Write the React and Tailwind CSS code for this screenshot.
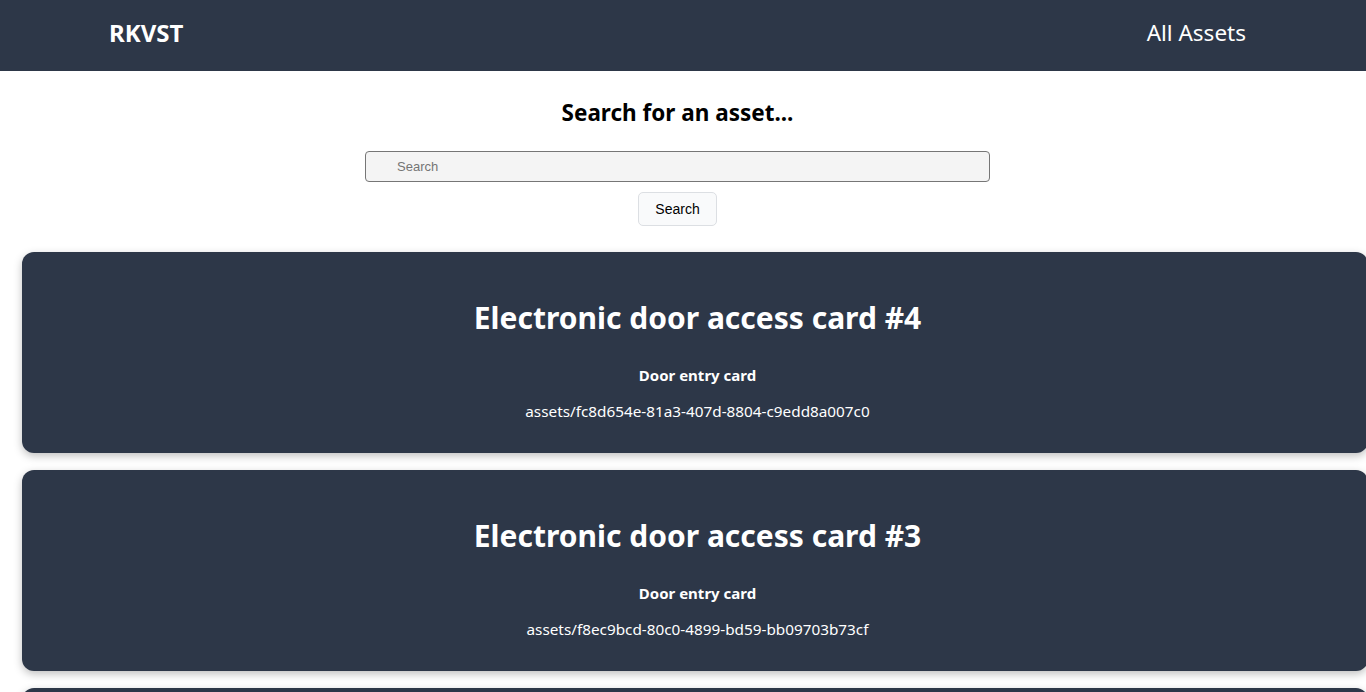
const assets = [
    {
        name: "Electronic door access card #4",
        type: "Door entry card",
        id: "assets/fc8d654e-81a3-407d-8804-c9edd8a007c0",
    },
    {
        name: "Electronic door access card #3",
        type: "Door entry card",
        id: "assets/f8ec9bcd-80c0-4899-bd59-bb09703b73cf",
    },
    {
        name: "Electronic door access card #2",
        type: "Door entry card",
        id: "assets/1b2c3d4e-5f60-4718-9a2b-3c4d5e6f7a8b",
    },
];

const AssetCard = ({ asset }) => (
    <div className="ml-[22px] flex h-[201px] w-[1346px] shrink-0 flex-col items-center rounded-xl bg-[#2d3748] pl-[5px] pt-[46px] text-white shadow-[0_3px_8px_rgba(0,0,0,0.25)]">
        <h2 className="text-[30px] font-bold leading-[40px]">{asset.name}</h2>
        <p className="mt-[27px] text-[15px] font-bold leading-[20px]">{asset.type}</p>
        <p className="mt-[16px] text-[15.3px] leading-[20px]">{asset.id}</p>
    </div>
);

export default function App() {
    return (
        <div
            className="min-h-screen w-full overflow-x-hidden bg-white"
            style={{ fontFamily: '"Noto Sans", "Open Sans", sans-serif' }}
        >
            {/* Top bar */}
            <header className="flex h-[71px] items-center justify-between bg-[#2d3748] pb-[6px] pl-[109px] pr-[120px] text-white">
                <span className="text-[24px] font-bold">RKVST</span>
                <span className="text-[22.5px]">All Assets</span>
            </header>

            {/* Search */}
            <div className="flex flex-col items-center pr-[11px] pt-[27px]">
                <h1 className="text-[22.5px] font-bold leading-[30px] text-black">Search for an asset...</h1>
                <input
                    type="text"
                    placeholder="Search"
                    className="mt-[23px] h-[31px] w-[625px] rounded-[4px] border border-[#767676] bg-[#f4f4f4] pl-[31px] text-[13px] placeholder:text-[#757575]"
                    style={{ fontFamily: '"Liberation Sans", Arial, sans-serif' }}
                />
                <button
                    type="button"
                    className="mt-[10px] h-[34px] w-[79px] rounded-[5px] border border-[#dcdfe3] bg-[#f9fafb] text-[14px] text-black"
                    style={{ fontFamily: '"Liberation Sans", Arial, sans-serif' }}
                >
                    Search
                </button>
            </div>

            {/* Asset list */}
            <div className="mt-[26px] flex flex-col gap-[17px] pb-6">
                {assets.map((a) => (
                    <AssetCard key={a.id} asset={a} />
                ))}
            </div>
        </div>
    );
}
